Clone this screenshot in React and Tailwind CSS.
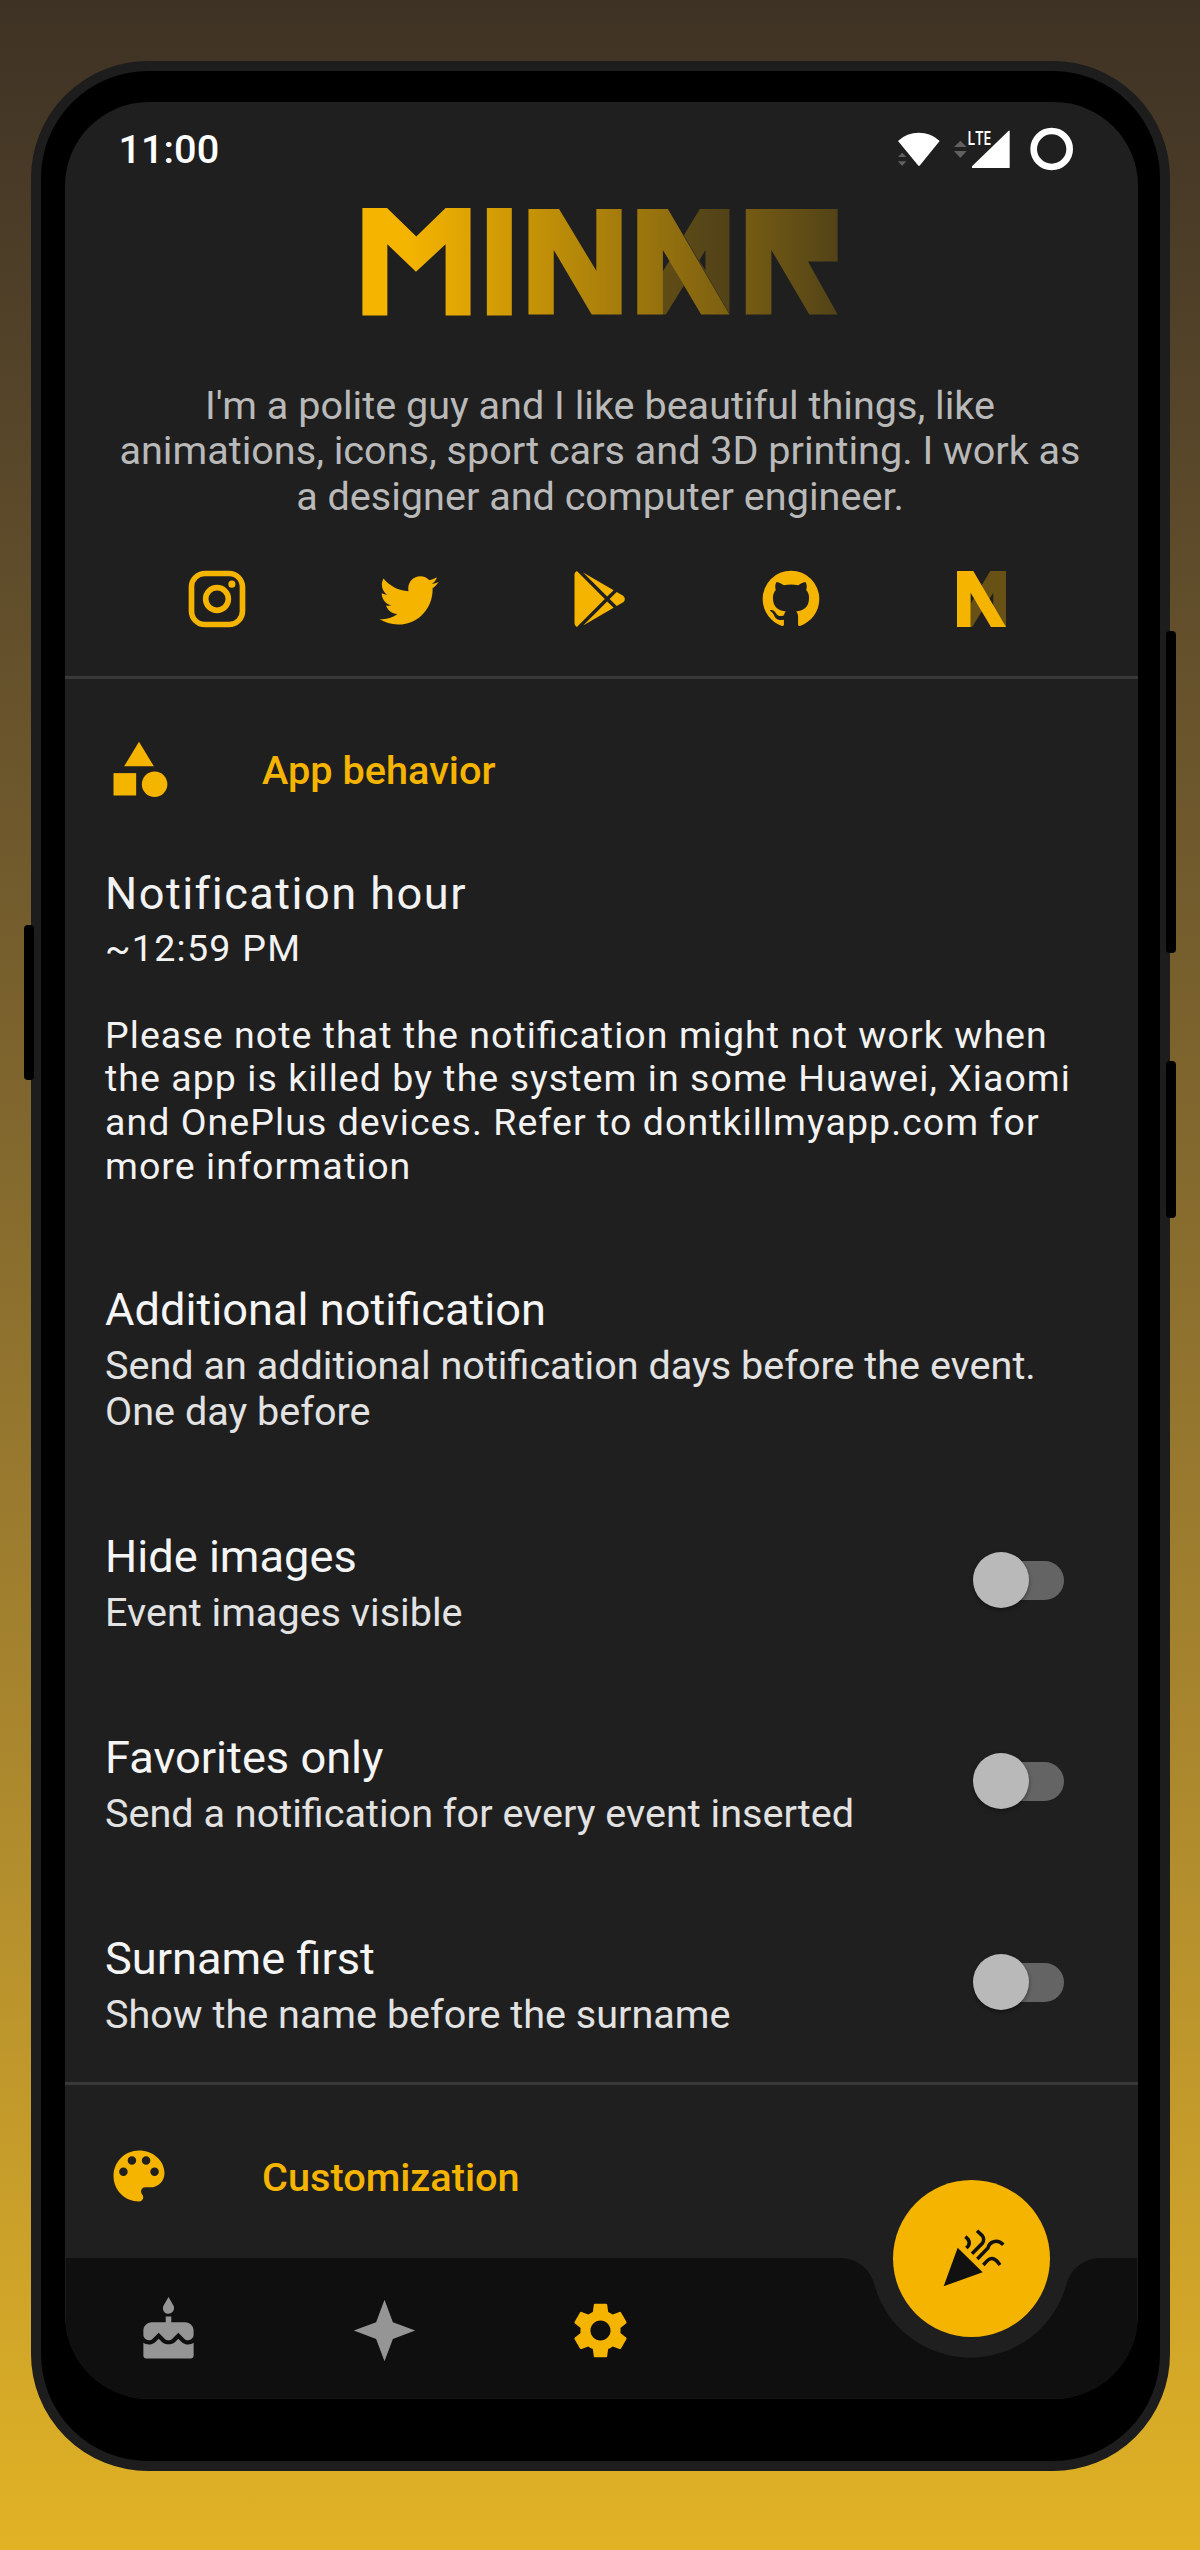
import React from "react";
import { MdCake, MdSettings } from "react-icons/md";

const socialPaths = [
  {
    name: "Instagram",
    d: "M7.8,2H16.2C19.4,2 22,4.6 22,7.8V16.2A5.8,5.8 0 0,1 16.2,22H7.8C4.6,22 2,19.4 2,16.2V7.8A5.8,5.8 0 0,1 7.8,2M7.6,4A3.6,3.6 0 0,0 4,7.6V16.4C4,18.39 5.61,20 7.6,20H16.4A3.6,3.6 0 0,0 20,16.4V7.6C20,5.61 18.39,4 16.4,4H7.6M17.25,5.5A1.25,1.25 0 0,1 18.5,6.75A1.25,1.25 0 0,1 17.25,8A1.25,1.25 0 0,1 16,6.75A1.25,1.25 0 0,1 17.25,5.5M12,7A5,5 0 0,1 17,12A5,5 0 0,1 12,17A5,5 0 0,1 7,12A5,5 0 0,1 12,7M12,9A3,3 0 0,0 9,12A3,3 0 0,0 12,15A3,3 0 0,0 15,12A3,3 0 0,0 12,9Z",
  },
  {
    name: "Twitter",
    d: "M22.46,6C21.69,6.35 20.86,6.58 20,6.69C20.88,6.16 21.56,5.32 21.88,4.31C21.05,4.81 20.13,5.16 19.16,5.36C18.37,4.5 17.26,4 16,4C13.65,4 11.73,5.92 11.73,8.29C11.73,8.63 11.77,8.96 11.84,9.27C8.28,9.09 5.11,7.38 3,4.79C2.63,5.42 2.42,6.16 2.42,6.94C2.42,8.43 3.17,9.75 4.33,10.5C3.62,10.5 2.96,10.3 2.38,10C2.38,10 2.38,10 2.38,10.03C2.38,12.11 3.86,13.85 5.82,14.24C5.46,14.34 5.08,14.39 4.69,14.39C4.42,14.39 4.15,14.36 3.89,14.31C4.43,16 6,17.26 7.89,17.29C6.43,18.45 4.58,19.13 2.56,19.13C2.22,19.13 1.88,19.11 1.54,19.07C3.44,20.29 5.7,21 8.12,21C16,21 20.33,14.46 20.33,8.79C20.33,8.6 20.33,8.42 20.32,8.23C21.16,7.63 21.88,6.87 22.46,6Z",
  },
  {
    name: "Google Play",
    d: "M3,20.5V3.5C3,2.91 3.34,2.39 3.84,2.15L13.69,12L3.84,21.85C3.34,21.6 3,21.09 3,20.5M16.81,15.12L6.05,21.34L14.54,12.85L16.81,15.12M20.16,10.81C20.5,11.08 20.75,11.5 20.75,12C20.75,12.5 20.53,12.9 20.18,13.18L17.89,14.5L15.39,12L17.89,9.5L20.16,10.81M6.05,2.66L16.81,8.88L14.54,11.15L6.05,2.66Z",
  },
  {
    name: "GitHub",
    d: "M12,2A10,10 0 0,0 2,12C2,16.42 4.87,20.17 8.84,21.5C9.34,21.58 9.5,21.27 9.5,21C9.5,20.77 9.5,20.14 9.5,19.31C6.73,19.91 6.14,17.97 6.14,17.97C5.68,16.81 5.03,16.5 5.03,16.5C4.12,15.88 5.1,15.9 5.1,15.9C6.1,15.97 6.63,16.93 6.63,16.93C7.5,18.45 8.97,18 9.54,17.76C9.63,17.11 9.89,16.67 10.17,16.42C7.95,16.17 5.62,15.31 5.62,11.5C5.62,10.39 6,9.5 6.65,8.79C6.55,8.54 6.2,7.5 6.75,6.15C6.75,6.15 7.59,5.88 9.5,7.17C10.29,6.95 11.15,6.84 12,6.84C12.85,6.84 13.71,6.95 14.5,7.17C16.41,5.88 17.25,6.15 17.25,6.15C17.8,7.5 17.45,8.54 17.35,8.79C18,9.5 18.38,10.39 18.38,11.5C18.38,15.32 16.04,16.16 13.81,16.41C14.17,16.72 14.5,17.33 14.5,18.26C14.5,19.6 14.5,20.68 14.5,21C14.5,21.27 14.66,21.59 15.17,21.5C19.14,20.16 22,16.42 22,12A10,10 0 0,0 12,2Z",
  },
];

const toggles = [
  { title: "Hide images", text: "Event images visible" },
  { title: "Favorites only", text: "Send a notification for every event inserted" },
  { title: "Surname first", text: "Show the name before the surname" },
];

function StatusIcons() {
  return (
    <svg className="h-[50px] w-[180px]" viewBox="105 255 540 150" fill="#fff">
      <path d="M114 303A91 91 0 0 1 239 303L180 376Q177 380 174 376Z" />
      <path fill="#606060" d="M114 351H139L126.500 338ZM114 364H139L126.500 378ZM282 321H320L301 302ZM282 333H320L301 354Z" />
      <text x="322" y="314.500" fontFamily="Open Sans" fontWeight="600" fontSize="57" textLength="72" lengthAdjust="spacingAndGlyphs">LTE</text>
      <path d="M336 379L446 272H449V384H336Z" />
      <circle cx="575" cy="327" r="54" fill="none" stroke="#fff" strokeWidth="20" />
    </svg>
  );
}

function Logo() {
  return (
    <svg className="ml-[275px] mt-4 h-[140px] w-[520px]" viewBox="0 0 1560 420">
      <defs>
        <linearGradient id="fade" gradientUnits="userSpaceOnUse" x1="200" y1="0" x2="1494" y2="0">
          <stop offset="0" stopColor="#f5b400" />
          <stop offset="1" stopColor="#f5b400" stopOpacity="0.240" />
        </linearGradient>
      </defs>
      <g fill="url(#fade)">
        <path d="M66 54H140L228 140L316 54H391V377H316V163L227 246L141 163V377H66Z" />
        <path d="M440 54H515V377H440Z" />
        <path d="M565 57H657L769 243V57H845V374H755L641 180V374H565Z" />
        <path opacity="0.550" d="M1169 57H1080L1032 136L1169 372ZM1097 180V242L1078 212Z" fillRule="evenodd" />
        <path opacity="0.550" d="M989 212L969 244V374H978L1032 287Z" />
        <path d="M892 57H984L1169 374H1084L969 180V374H892Z" />
        <path d="M1218 57H1494V215H1405L1494 374H1409L1295 180V374H1218Z" />
      </g>
    </svg>
  );
}

function SmallN() {
  return (
    <svg className="h-[56px] w-[49px] -ml-1" viewBox="0 0 277 317" preserveAspectRatio="none" fill="#f5b400">
      <path opacity="0.340" d="M277 0H188L77 186V317H86L205 123V317H277Z" />
      <path d="M0 0H92L277 317H192L77 123V317H0Z" />
    </svg>
  );
}

function SectionHeader({ icon, children }) {
  return (
    <div className="mt-[57px] flex h-[68px] items-center gap-[90px] pl-10 text-[#f5b400]">
      {icon}
      <h2 className="mt-0.5 -ml-px text-[39.7px] leading-[47px] font-medium">{children}</h2>
    </div>
  );
}

function Switch() {
  return (
    <div className="mt-[-6px] flex h-14 w-[91px] items-center">
      <div className="size-14 shrink-0 rounded-full bg-[#b9b9b9] shadow-[0_2px_4px_rgba(0,0,0,0.4)] z-10" />
      <div className="-ml-11 h-[39px] w-[79px] rounded-full bg-[#646464]" />
    </div>
  );
}

function Title({ children }) {
  return <h3 className="text-[45.2px] leading-[53px] text-[#f5f5f5]">{children}</h3>;
}

function Sub({ children }) {
  return <p className="mt-[7px] text-[39.6px] leading-[46px] text-[#e2e2e2]">{children}</p>;
}

function BottomBar() {
  return (
    <nav className="relative mt-[48px] h-[141px] w-full">
      <svg className="absolute inset-0 h-full w-full" viewBox="0 0 1073 141" fill="#0f0f0f">
        <path d="M0 0H775A35 35 0 0 1 809.500 25.500A99.800 99.800 0 0 0 1002.500 25.500A35 35 0 0 1 1037 0H1073V141H0Z" />
      </svg>
      <div className="relative flex h-full items-center pt-1 text-[#959595]">
        <div className="ml-[-5px] flex w-[216px] justify-center">
          <MdCake size={67} />
        </div>
        <div className="flex w-[216px] justify-center">
          <svg className="size-[67px]" viewBox="0 0 24 24" fill="currentColor">
            <path d="M12,1L9,9L1,12L9,15L12,23L15,15L23,12L15,9L12,1Z" />
          </svg>
        </div>
        <div className="flex w-[216px] justify-center text-[#f5b400]">
          <MdSettings size={67} />
        </div>
      </div>
      <button className="absolute top-[-78px] left-[827.5px] size-[157px] rounded-full bg-[#f5b400]">
        <svg className="size-full" viewBox="158 118 471 471">
          <path fill="#111" d="M352 321L427 395L310 437Z" />
          <g fill="none" stroke="#111" strokeWidth="10.500">
            <path d="M375 288Q397 305 378 322" />
            <path d="M410 270L426 285Q434 296 426 308L395 339" />
            <path d="M411 355L443 322Q446 308 458 304Q474 297 489 312" />
            <path d="M429 373L441 360Q458 342 479 373" />
          </g>
        </svg>
      </button>
    </nav>
  );
}

export default function App() {
  return (
    <div className="relative flex h-[2550px] w-[1200px] items-start bg-linear-to-b from-[#3e3224] to-[#e1b224] pt-[61px] pl-[31px] font-[Roboto,sans-serif]">
      <div className="absolute top-[925px] left-6 h-[155px] w-[10px] rounded-[4px] bg-black z-10" />
      <div className="absolute top-[631px] left-[1166px] h-[322px] w-[10px] rounded-[4px] bg-black z-10" />
      <div className="absolute top-[1061px] left-[1166px] h-[157px] w-[10px] rounded-[4px] bg-black z-10" />

      <div className="h-[2410px] w-[1139px] rounded-[117px] border-[10px] border-[#1d1d1d] bg-black pt-[31px] pl-6">
        <div className="flex h-[2297px] w-[1073px] flex-col overflow-hidden rounded-[84px] bg-[#1f1f1f] whitespace-nowrap">
          <header className="flex h-[72px] items-start justify-between pt-6 pr-[63px] pl-[53.5px]">
            <span className="text-[39.7px] leading-[47px] font-medium text-white">11:00</span>
            <div className="mt-[-1px]">
              <StatusIcons />
            </div>
          </header>

          <Logo />

          <p className="mt-[53px] -ml-[3px] text-center text-[39.6px] leading-[45.7px] text-[#b9b9b9]">
            I'm a polite guy and I like beautiful things, like
            <br />
            animations, icons, sport cars and 3D printing. I work as
            <br />a designer and computer engineer.
          </p>

          <div className="mt-[45px] ml-[57px] grid w-[957px] grid-cols-5 place-items-center">
            {socialPaths.map((s) => (
              <svg key={s.name} className="size-[68px] -ml-px" viewBox="0 0 24 24" fill="#f5b400">
                <path d={s.d} />
              </svg>
            ))}
            <SmallN />
          </div>

          <div className="mt-[43px] h-[3px] w-full shrink-0 bg-[#383838]" />

          <SectionHeader
            icon={
              <svg className="size-[68px]" viewBox="0 0 24 24" fill="currentColor">
                <path d="M12 2L17.250 10.700H6.750Z" />
                <path d="M3 13.100h8v7.900H3z" />
                <circle cx="17.500" cy="17" r="4.500" />
              </svg>
            }
          >
            App behavior
          </SectionHeader>

          <section className="mt-[63px] pl-10 text-[#f2f2f2]">
            <h3 className="text-[45.2px] leading-[53px] tracking-[1.45px]">Notification hour</h3>
            <p className="mt-1.5 text-[37.6px] leading-[44px] tracking-[1.25px]">~12:59 PM</p>
            <p className="mt-11 text-[37.5px] leading-[43.6px] tracking-[1.05px] [font-feature-settings:'liga'_1]">
              Please note that the notification might not work when
              <br />
              the app is killed by the system in some Huawei, Xiaomi
              <br />
              and OnePlus devices. Refer to dontkillmyapp.com for
              <br />
              more information
            </p>
          </section>

          <section className="mt-[95px] pl-10">
            <Title>Additional notification</Title>
            <Sub>
              Send an additional notification days before the event.
              <br />
              One day before
            </Sub>
          </section>

          <div className="mt-[95px] flex flex-col gap-[95px] pr-[74px] pl-10">
            {toggles.map((t) => (
              <div key={t.title} className="flex items-center justify-between">
                <div>
                  <Title>{t.title}</Title>
                  <Sub>{t.text}</Sub>
                </div>
                <Switch />
              </div>
            ))}
          </div>

          <div className="mt-[44px] h-[3px] w-full shrink-0 bg-[#383838]" />

          <SectionHeader
            icon={
              <svg className="size-[68px]" viewBox="0 0 24 24" fill="currentColor">
                <path d="M12 3c-4.970 0-9 4.030-9 9s4.030 9 9 9c.83 0 1.500-.67 1.500-1.500 0-.39-.15-.74-.39-1.010-.23-.26-.38-.61-.38-.99 0-.83.67-1.500 1.500-1.500H16c2.760 0 5-2.240 5-5 0-4.420-4.030-8-9-8zm-5.500 9c-.83 0-1.500-.67-1.500-1.500S5.670 9 6.500 9 8 9.670 8 10.500 7.330 12 6.500 12zm3-4C8.670 8 8 7.330 8 6.500S8.670 5 9.500 5s1.500.67 1.500 1.500S10.330 8 9.500 8zm5 0c-.83 0-1.500-.67-1.500-1.500S13.670 5 14.500 5s1.500.67 1.500 1.500S15.330 8 14.500 8zm3 4c-.83 0-1.500-.67-1.500-1.500S16.670 9 17.500 9s1.500.67 1.500 1.500-.67 1.500-1.500 1.500z" />
              </svg>
            }
          >
            Customization
          </SectionHeader>

          <BottomBar />
        </div>
      </div>
    </div>
  );
}
